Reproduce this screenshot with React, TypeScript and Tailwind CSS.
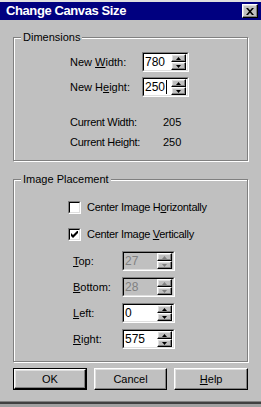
import React from 'react';

const raised =
  'border border-t-white border-l-white border-r-black border-b-black shadow-[inset_-1px_-1px_0_#808080,inset_1px_1px_0_#dfdfdf]';

function Spinner({ disabled }: { disabled?: boolean }) {
  const fill = disabled ? '#808080' : '#000000';
  return (
    <div className="flex flex-col w-[15px] h-[16px]">
      <div className={`flex-1 flex items-center justify-center bg-[#c0c0c0] ${raised}`}>
        <svg width="5" height="3" viewBox="0 0 5 3">
          <path d="M2.5 0L5 3H0Z" fill={fill} />
        </svg>
      </div>
      <div className={`flex-1 flex items-center justify-center bg-[#c0c0c0] ${raised}`}>
        <svg width="5" height="3" viewBox="0 0 5 3">
          <path d="M0 0H5L2.5 3Z" fill={fill} />
        </svg>
      </div>
    </div>
  );
}

function Field({ value, width, disabled, caret }: { value: string; width: string; disabled?: boolean; caret?: boolean }) {
  return (
    <div className={`h-[20px] ${width} flex border border-t-[#808080] border-l-[#808080] border-b-white border-r-white`}>
      <div
        className={`flex-1 flex items-center justify-between pl-[1px] pr-px border border-t-black border-l-black border-b-[#dfdfdf] border-r-[#dfdfdf] ${
          disabled ? 'bg-[#c0c0c0] text-[#808080]' : 'bg-white text-black'
        }`}
      >
        <span className="flex items-center text-[12px] leading-none">
          {value}
          {caret && <span className="ml-px w-px h-[14px] bg-black" />}
        </span>
        <Spinner disabled={disabled} />
      </div>
    </div>
  );
}

function Checkbox({ checked }: { checked?: boolean }) {
  return (
    <div className="w-[13px] h-[13px] flex border border-t-[#808080] border-l-[#808080] border-b-white border-r-white">
      <div className="flex-1 flex items-center justify-center bg-white border border-t-black border-l-black border-b-[#dfdfdf] border-r-[#dfdfdf]">
        {checked && (
          <svg width="7" height="7" viewBox="0 0 7 7">
            <path d="M0 2L2 4L7 -1V2L2 7L0 5Z" fill="#000" />
          </svg>
        )}
      </div>
    </div>
  );
}

function Group({ title, children, className }: { title: string; children: React.ReactNode; className?: string }) {
  return (
    <fieldset
      className={`border border-[#808080] shadow-[inset_1px_1px_0_white,1px_1px_0_white] ${className ?? ''}`}
    >
      <legend className="ml-[7px] px-[2px] bg-[#c0c0c0] text-[11px] leading-[13px]">{title}</legend>
      {children}
    </fieldset>
  );
}

function Button({ children, def }: { children: React.ReactNode; def?: boolean }) {
  return (
    <div className={`w-[74px] h-[22px] flex ${def ? 'border border-black' : ''}`}>
      <div className={`flex-1 flex items-center justify-center text-[11px] ${raised}`}>{children}</div>
    </div>
  );
}

export default function App() {
  return (
    <div className="w-[261px] h-[407px] bg-[#c0c0c0] flex flex-col overflow-hidden text-black font-['Liberation_Sans',Arial,sans-serif]">
      <div className="h-[2px] bg-[#dfdfdf]" />
      <div className="h-[18px] bg-[#000080] flex items-center justify-between pl-[6px] pr-[3px]">
        <span className="text-white font-bold text-[13px] tracking-[-0.4px]">Change Canvas Size</span>
        <div className={`w-[16px] h-[14px] bg-[#c0c0c0] flex items-center justify-center ${raised}`}>
          <svg width="8" height="7" viewBox="0 0 8 7">
            <path d="M0 0h2l2 2.2L6 0h2L5 3.5L8 7H6L4 4.8L2 7H0l3-3.5Z" fill="#000" />
          </svg>
        </div>
      </div>

      <div className="px-[13px] flex flex-col">
        <Group title="Dimensions" className="mt-[11px] h-[130px]">
          <div className="pl-[56px] pt-[8px] flex flex-col">
            <div className="flex items-center h-[20px]">
              <span className="w-[72px] text-[11px]">
                New <span className="underline">W</span>idth:
              </span>
              <Field value="780" width="w-[47px]" />
            </div>
            <div className="flex items-center h-[20px] mt-[5px]">
              <span className="w-[72px] text-[11px]">
                New H<span className="underline">e</span>ight:
              </span>
              <Field value="250" width="w-[47px]" caret />
            </div>
            <div className="flex items-center h-[20px] mt-[15px] text-[11px]">
              <span className="w-[93px] tracking-[-0.3px]">Current Width:</span>
              <span>205</span>
            </div>
            <div className="flex items-center h-[20px] text-[11px]">
              <span className="w-[93px] tracking-[-0.3px]">Current Height:</span>
              <span>250</span>
            </div>
          </div>
        </Group>

        <Group title="Image Placement" className="mt-[12px] h-[189px]">
          <div className="flex flex-col pt-[13px]">
            <div className="pl-[54px] flex items-center h-[17px] text-[11px]">
              <Checkbox />
              <span className="ml-[6px] tracking-[-0.3px]">
                Center Image H<span className="underline">o</span>rizontally
              </span>
            </div>
            <div className="pl-[54px] flex items-center h-[17px] mt-[10px] text-[11px]">
              <Checkbox checked />
              <span className="ml-[6px] tracking-[-0.3px]">
                Center Image <span className="underline">V</span>ertically
              </span>
            </div>
            <div className="pl-[59px] flex flex-col gap-[6px] mt-[8px]">
              {[
                { k: 'T', rest: 'op:', v: '27', d: true },
                { k: 'B', rest: 'ottom:', v: '28', d: true },
                { k: 'L', rest: 'eft:', v: '0', d: false },
                { k: 'R', rest: 'ight:', v: '575', d: false },
              ].map((r) => (
                <div key={r.k} className="flex items-center h-[20px]">
                  <span className="w-[49px] text-[11px]">
                    <span className="underline">{r.k}</span>
                    {r.rest}
                  </span>
                  <Field value={r.v} width="w-[53px]" disabled={r.d} />
                </div>
              ))}
            </div>
          </div>
        </Group>

        <div className="flex gap-[7px] mt-[6px]">
          <Button def>OK</Button>
          <Button>Cancel</Button>
          <Button>
            <span>
              <span className="underline">H</span>elp
            </span>
          </Button>
        </div>
      </div>

      <div className="flex-1" />
      <div className="h-px bg-[#808080]" />
      <div className="h-[2px] bg-[#404040]" />
      <div className="h-[3px] bg-[#a0a0a0]" />
    </div>
  );
}
